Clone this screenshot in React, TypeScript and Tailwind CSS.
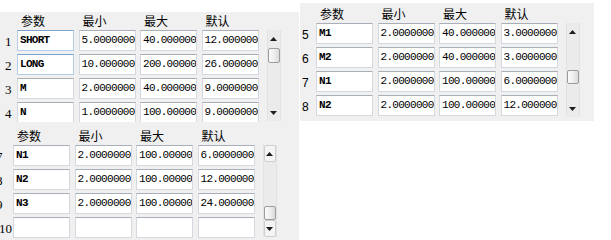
type Row = {
  n: string
  cells: string[]
  labelClass?: string
  focus?: boolean
}

const PANEL_A: Row[] = [
  { n: '1', cells: ['SHORT', '5.00000000', '40.0000000', '12.0000000'], focus: true },
  { n: '2', cells: ['LONG', '10.0000000', '200.000000', '26.0000000'], focus: true },
  { n: '3', cells: ['M', '2.00000000', '40.0000000', '9.00000000'] },
  { n: '4', cells: ['N', '1.00000000', '100.000000', '9.00000000'] },
]

const PANEL_B: Row[] = [
  { n: '5', cells: ['M1', '2.00000000', '40.0000000', '3.00000000'] },
  { n: '6', cells: ['M2', '2.00000000', '40.0000000', '3.00000000'] },
  { n: '7', cells: ['N1', '2.00000000', '100.000000', '6.00000000'] },
  { n: '8', cells: ['N2', '2.00000000', '100.000000', '12.0000000'] },
]

const PANEL_C: Row[] = [
  { n: '7', cells: ['N1', '2.00000000', '100.000000', '6.00000000'], labelClass: 'ml-[-4px]' },
  { n: '8', cells: ['N2', '2.00000000', '100.000000', '12.0000000'], labelClass: 'ml-[-4px]' },
  { n: '9', cells: ['N3', '2.00000000', '100.000000', '24.0000000'], labelClass: 'ml-[-4px]' },
  { n: '10', cells: ['', '', '', ''], labelClass: 'ml-[-1px]' },
]

const HEADERS = ['参数', '最小', '最大', '默认']

function Arrow({ up }: { up?: boolean }) {
  return (
    <svg width="7" height="4" viewBox="0 0 7 4">
      {up ? (
        <polygon points="0,4 7,4 3.5,0" fill="#1e1e1e" />
      ) : (
        <polygon points="0,0 7,0 3.5,4" fill="#1e1e1e" />
      )}
    </svg>
  )
}

function ScrollBar({
  height,
  thumb,
  boxed,
}: {
  height: string
  thumb: string
  boxed?: boolean
}) {
  const btn = boxed
    ? 'h-[17px] flex items-center justify-center border border-[#cfcfcf] bg-[#f4f4f4] rounded-[2px]'
    : 'h-[17px] flex items-center justify-center'
  return (
    <div
      className={`ml-[8px] w-[14px] flex flex-col bg-[#ebebeb] border-x border-[#e2e2e2] ${height}`}
    >
      <div className={btn}>
        <Arrow up />
      </div>
      <div className="flex-1 flex flex-col">
        <div
          className={`rounded-[2px] border border-[#9c9c9c] bg-gradient-to-r from-[#fafafa] via-[#efefef] to-[#dadada] ${thumb}`}
        />
      </div>
      <div className={btn}>
        <Arrow />
      </div>
    </div>
  )
}

function Panel({
  rows,
  labelW,
  labelFont,
  scroll,
}: {
  rows: Row[]
  labelW: string
  labelFont: string
  scroll: React.ReactNode
}) {
  return (
    <div className="flex flex-col">
      <div className="flex h-[18px] items-center">
        <div className={labelW} />
        <div className="flex gap-[4.5px]">
          {HEADERS.map((h) => (
            <div
              key={h}
              className="w-[57px] pl-[4px] text-[12px] leading-[18px] text-black font-['Noto_Sans_CJK_SC',sans-serif]"
            >
              {h}
            </div>
          ))}
        </div>
      </div>
      <div className="flex items-start">
        <div className="flex flex-col gap-[3px]">
          {rows.map((r) => (
            <div key={r.n} className="flex items-center">
              <div className={`${labelW} pt-[2px] whitespace-nowrap`}>
                <span className={`block text-black ${labelFont} ${r.labelClass ?? ''}`}>{r.n}</span>
              </div>
              <div className="flex gap-[4.5px]">
                {r.cells.map((c, i) => (
                  <div
                    key={i}
                    className={`w-[57px] h-[21px] bg-white border overflow-hidden whitespace-nowrap flex items-center pl-[2px] text-[11px] tracking-[-0.7px] text-black font-['Liberation_Mono',monospace] ${
                      i === 0 && r.focus
                        ? 'border-[#b5cde6] border-t-[#7da2ce]'
                        : 'border-[#d5d9df] border-t-[#a9afb8]'
                    } ${i === 0 ? 'font-bold' : ''}`}
                  >
                    {c}
                  </div>
                ))}
              </div>
            </div>
          ))}
        </div>
        {scroll}
      </div>
    </div>
  )
}

export default function App() {
  return (
    <div className="w-[611px] h-[240px] bg-white flex items-start overflow-hidden">
      <div className="w-[299px] h-[240px] pt-[12px] flex flex-col">
        <div className="h-[110px] bg-[#f0f0f0]">
          <Panel
            rows={PANEL_A}
            labelW="w-[17px] pl-[5px]"
            labelFont="text-[13px] leading-[14px] font-['Liberation_Serif',serif]"
            scroll={<ScrollBar height="h-[91px]" thumb="mt-[1px] h-[15px]" />}
          />
        </div>
        <div className="flex-1 bg-[#f0f0f0] pt-[5px] overflow-hidden">
          <Panel
            rows={PANEL_C}
            labelW="w-[13px]"
            labelFont="text-[13px] leading-[14px] font-['Liberation_Serif',serif]"
            scroll={<ScrollBar height="h-[92px]" thumb="mt-[44px] h-[14px]" boxed />}
          />
        </div>
      </div>
      <div className="ml-[1px] mt-[3px] w-[294px] h-[118px] bg-[#f0f0f0] pt-[2px]">
        <Panel
          rows={PANEL_B}
          labelW="w-[16px] pl-[2px]"
          labelFont="text-[12px] leading-[14px] font-['Liberation_Sans',sans-serif]"
          scroll={<ScrollBar height="h-[94px]" thumb="mt-[30px] h-[14px]" />}
        />
      </div>
    </div>
  )
}
